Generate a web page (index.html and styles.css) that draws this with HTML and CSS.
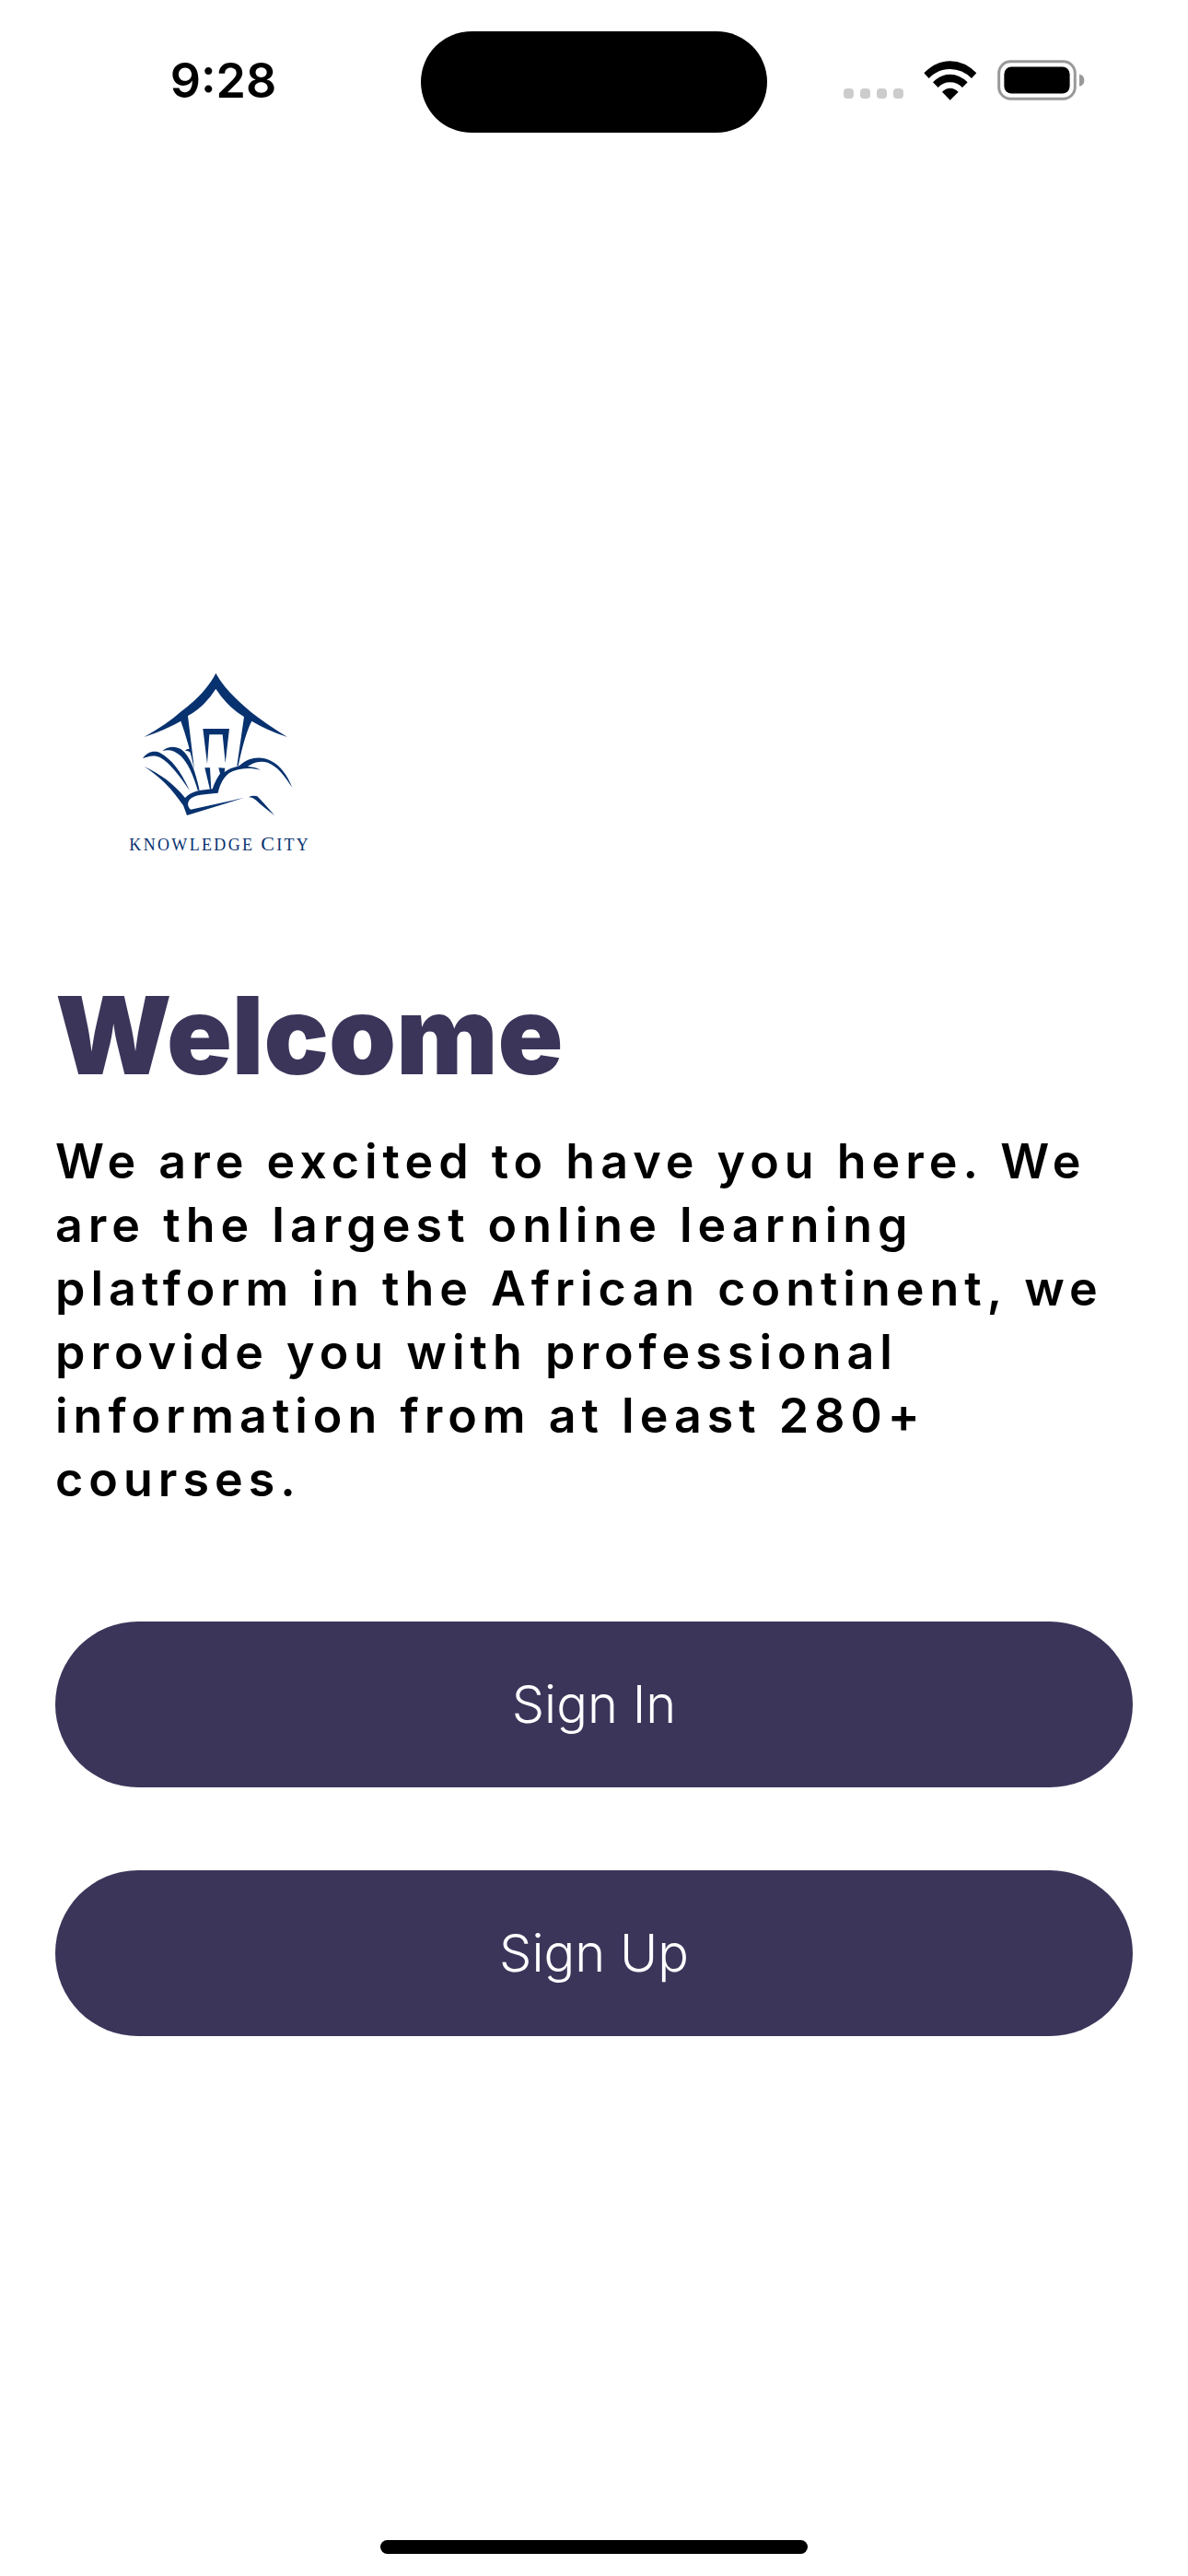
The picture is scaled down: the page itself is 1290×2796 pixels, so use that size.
FILE: index.html
```html
<!DOCTYPE html>
<html lang="en">
<head>
<meta charset="utf-8">
<meta name="viewport" content="width=device-width, initial-scale=1">
<title>Knowledge City</title>
<link rel="stylesheet" href="styles.css">
</head>
<body>
<div class="screen">
  <header class="status">
    <time class="status-time">9:28</time>
    <div class="island"></div>
    <div class="status-icons">
      <div class="dots"><i></i><i></i><i></i><i></i></div>
      <svg class="wifi" viewBox="311 44 174 129" aria-label="Wi-Fi">
        <path d="M312 84Q350 45 397 45T483 84L467 101Q437 71 397 71T328 101Z"/>
        <path d="M341 114Q366 88 397 88T454 114L437 131Q421 114 397 114T358 131Z"/>
        <path d="M371 145Q383 133 397 133T424 145L397 172Z"/>
      </svg>
      <svg class="battery" viewBox="551 44 284 131" aria-label="Battery">
        <rect x="556" y="49" width="247" height="121" rx="38" fill="none" stroke="#999" stroke-width="9"/>
        <rect x="573" y="66" width="213" height="87" rx="24"/>
        <path d="M817 90Q833 94 833 110T817 130Z" fill="#999"/>
      </svg>
    </div>
  </header>

  <main class="content">
    <svg class="logo" viewBox="0 0 660 690" role="img" aria-label="Knowledge City">
      <!-- roof -->
      <path d="M313 62C341 112 384 152 428 189Q475 226 546 270Q480 248 430 218Q407 262 386 364L382 364L405 204Q352 173 313 113Q276 172 222 201L243 376Q225 290 199 218Q150 246 79 270Q155 228 200 187C250 149 290 108 313 62Z"/>
      <!-- door -->
      <path d="M271 243H357L344 355L335 262H292L285 357Z"/>
      <path d="M277 370H294L298 441L294 441Z"/>
      <!-- fingers -->
      <path d="M75 340C88 319 112 312 132 322C168 342 198 379 228 445C191 391 163 354 132 337C113 326 91 333 75 340Z"/>
      <path d="M139 315C159 299 181 299 200 310C232 333 246 384 260 443L254 443C239 394 223 355 198 331C179 313 160 309 139 315Z"/>
      <path d="M212 314Q221 307 232 309L234 323Q225 313 212 314Z"/>
      <!-- palm and thumb -->
      <path d="M79 366C132 390 175 421 213 468C236 443 266 444 302 439C310 416 319 400 327 389L322 370L343 371L341 384C359 371 376 368 390 363C421 335 458 331 492 347C525 363 547 397 562 434C538 399 516 366 482 353C451 345 431 357 417 366C433 367 447 370 459 377C424 369 392 371 364 383C341 394 327 421 320 452C280 457 241 455 227 475C219 487 222 498 231 506L404 468L219 525L207 493C174 443 130 397 79 366Z"/>
      <path d="M420 465Q435 459 448 463Q467 482 504 525Q465 496 443 475Q433 466 420 465Z"/>
      <text class="logo-text" x="31" y="640">KNOWLEDGE <tspan class="logo-cap">C</tspan>ITY</text>
    </svg>

    <h1 class="title">Welcome</h1>
    <p class="intro">We are excited to have you here. We are the largest online learning platform in the African continent, we provide you with professional information from at least 280+ courses.</p>

    <div class="actions">
      <button class="button" type="button">Sign In</button>
      <button class="button" type="button">Sign Up</button>
    </div>
  </main>

  <footer class="home"><div class="home-bar"></div></footer>
</div>
</body>
</html>
```

FILE: styles.css
```css
* {
  box-sizing: border-box;
}

body {
  margin: 0;
  background: #fff;
  color: #000;
  font-family: Inter, "Liberation Sans", sans-serif;
}

.screen {
  min-height: 100vh;
  display: flex;
  flex-direction: column;
}

.status {
  height: 178px;
  display: grid;
  grid-template-columns: 1fr 376px 1fr;
  align-items: center;
}

.status-time {
  padding: 0 0 2px 28px;
  text-align: center;
  font-size: 52px;
  line-height: 64px;
  font-weight: 600;
}

.island {
  height: 110px;
  border-radius: 55px;
  background: #000;
}

.status-icons {
  display: flex;
  justify-content: flex-end;
  align-items: center;
  gap: 22px;
  padding: 0 112px 4px 0;
}

.dots {
  display: flex;
  align-self: flex-end;
  gap: 7px;
  padding-bottom: 2px;
}

.dots i {
  width: 11px;
  height: 11px;
  border-radius: 4px;
  background: #ccc;
}

.wifi {
  width: 58px;
  height: 43px;
}

.battery {
  width: 95px;
  height: 44px;
}

.content {
  flex: 1;
  display: flex;
  flex-direction: column;
  justify-content: center;
  padding: 48px 60px 0;
}

.logo {
  width: 220px;
  height: 230px;
  margin-left: 70px;
  fill: #08326f;
}

.logo-text {
  font-family: "Liberation Serif", serif;
  font-size: 54px;
  letter-spacing: 7px;
}

.logo-cap {
  font-size: 66px;
}

.title {
  margin: 112px 0 0;
  color: #3c355a;
  font-size: 117px;
  line-height: 144px;
  font-weight: 900;
}

.intro {
  margin: 30px 0 0;
  font-size: 52px;
  line-height: 69px;
  font-weight: 600;
  letter-spacing: 6px;
}

.actions {
  display: grid;
  gap: 90px;
  margin-top: 120px;
}

.button {
  height: 180px;
  border: 0;
  border-radius: 90px;
  background: #3c355a;
  color: #fff;
  font-family: inherit;
  font-size: 56px;
  font-weight: 300;
}

.home {
  height: 102px;
  display: flex;
  justify-content: center;
  align-items: flex-end;
  padding-bottom: 24px;
}

.home-bar {
  width: 36%;
  height: 15px;
  border-radius: 8px;
  background: #000;
}
```
